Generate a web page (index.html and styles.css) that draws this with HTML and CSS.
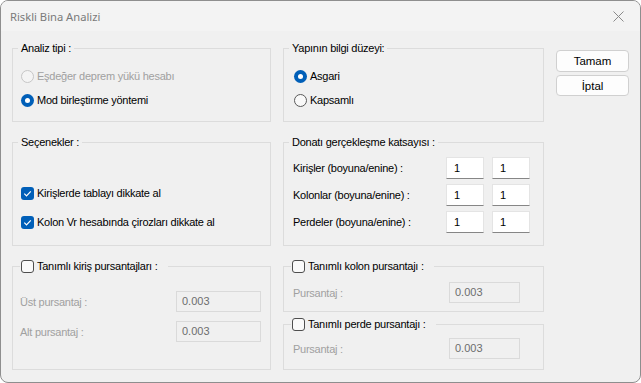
FILE: index.html
```html
<!DOCTYPE html>
<html>
<head>
    <title>Riskli Bina Analizi</title>
    <meta charset="utf-8">
    <link rel="stylesheet" href="styles.css">
</head>
<body>
    <div class="window">
        <div class="titlebar">
            <span class="title">Riskli Bina Analizi</span>
            <svg class="close" viewBox="0 0 11 11"><path d="M0.5 0.5 L10.5 10.5 M10.5 0.5 L0.5 10.5" stroke="#8a8a8a" stroke-width="1" fill="none"/></svg>
        </div>

        <div class="content">
            <!-- Analiz tipi -->
            <fieldset class="group">
                <legend class="legend">Analiz tipi :</legend>
                <div class="options opt-analiz">
                    <div class="opt disabled"><span class="radio"></span>Eşdeğer deprem yükü hesabı</div>
                    <div class="opt"><span class="radio on"></span>Mod birleştirme yöntemi</div>
                </div>
            </fieldset>

            <!-- Bilgi düzeyi -->
            <fieldset class="group">
                <legend class="legend">Yapının bilgi düzeyi:</legend>
                <div class="options opt-bilgi">
                    <div class="opt"><span class="radio on"></span>Asgari</div>
                    <div class="opt"><span class="radio"></span>Kapsamlı</div>
                </div>
            </fieldset>

            <div class="buttons">
                <button class="btn">Tamam</button>
                <button class="btn btn-cancel">İptal</button>
            </div>

            <!-- Seçenekler -->
            <fieldset class="group">
                <legend class="legend">Seçenekler :</legend>
                <div class="options opt-secenek">
                    <div class="opt opt-check">
                        <span class="check on"><svg viewBox="0 0 13 13"><path d="M3.3 6.7 L5.5 8.9 L9.8 4.4" stroke="#fff" stroke-width="1.2" fill="none"/></svg></span>
                        Kirişlerde tablayı dikkate al
                    </div>
                    <div class="opt opt-check">
                        <span class="check on"><svg viewBox="0 0 13 13"><path d="M3.3 6.7 L5.5 8.9 L9.8 4.4" stroke="#fff" stroke-width="1.2" fill="none"/></svg></span>
                        Kolon Vr hesabında çirozları dikkate al
                    </div>
                </div>
            </fieldset>

            <!-- Donatı gerçekleşme katsayısı -->
            <fieldset class="group">
                <legend class="legend">Donatı gerçekleşme katsayısı :</legend>
                <div class="rows rows-donati">
                    <div class="row"><span class="lbl">Kirişler (boyuna/enine) :</span><span class="field">1</span><span class="field">1</span></div>
                    <div class="row"><span class="lbl">Kolonlar (boyuna/enine) :</span><span class="field">1</span><span class="field">1</span></div>
                    <div class="row"><span class="lbl">Perdeler (boyuna/enine) :</span><span class="field">1</span><span class="field">1</span></div>
                </div>
            </fieldset>

            <!-- Tanımlı kiriş pursantajları -->
            <fieldset class="group">
                <legend class="legend legend-check"><span class="check"></span>Tanımlı kiriş pursantajları :</legend>
                <div class="rows rows-kiris">
                    <div class="row row-off"><span class="lbl">Üst pursantaj :</span><span class="field off">0.003</span></div>
                    <div class="row row-off"><span class="lbl">Alt pursantaj :</span><span class="field off">0.003</span></div>
                </div>
            </fieldset>

            <div class="stack">
                <fieldset class="group">
                    <legend class="legend legend-check"><span class="check"></span>Tanımlı kolon pursantajı :</legend>
                    <div class="rows rows-kolon">
                        <div class="row row-off"><span class="lbl">Pursantaj :</span><span class="field off">0.003</span></div>
                    </div>
                </fieldset>
                <fieldset class="group">
                    <legend class="legend legend-check"><span class="check"></span>Tanımlı perde pursantajı :</legend>
                    <div class="rows rows-perde">
                        <div class="row row-off"><span class="lbl">Pursantaj :</span><span class="field off">0.003</span></div>
                    </div>
                </fieldset>
            </div>
        </div>
    </div>
</body>
</html>
```

FILE: styles.css
```css
* {
    box-sizing: border-box;
}

html {
    background: #fff;
}

body {
    margin: 0;
    font-family: 'Liberation Sans', Arial, sans-serif;
    font-size: 11px;
    letter-spacing: -0.25px;
    color: #000;
}

.window {
    width: 641px;
    height: 383px;
    border: 1px solid #8e8e8e;
    border-radius: 8px;
    background: #f0f0f0;
    overflow: hidden;
}

.titlebar {
    height: 30px;
    background: #f3f3f3;
    display: flex;
    align-items: center;
    justify-content: space-between;
    padding: 0 16px 0 9px;
}

.title {
    font-family: 'Noto Sans', sans-serif;
    font-size: 11.2px;
    letter-spacing: 0;
    color: #7a7a7a;
}

.close {
    width: 11px;
    height: 11px;
}

.content {
    display: grid;
    grid-template-columns: 259px 261px 73px;
    grid-template-rows: 81px 111px 111px;
    column-gap: 12px;
    row-gap: 13px;
    padding: 10px 0 0 11px;
}

/* group boxes */
.group {
    margin: 0;
    padding: 0;
    min-width: 0;
    border: 1px solid #dcdcdc;
}

.legend {
    margin-left: 5px;
    padding: 0 3px;
    height: 14px;
    line-height: 14px;
}

.legend-check {
    display: flex;
    align-items: center;
    gap: 3px;
    margin-left: 7px;
    padding: 0 10px 0 1px;
}

.options {
    display: flex;
    flex-direction: column;
}

.opt-analiz {
    padding: 9px 0 0 8px;
}

.opt-bilgi {
    padding: 9px 0 0 10px;
}

.opt-secenek {
    padding: 32px 0 0 8px;
    gap: 5px;
}

.opt {
    display: flex;
    align-items: center;
    gap: 3px;
    height: 24px;
}

.opt.disabled {
    color: #a0a0a0;
}

/* radio and check marks */
.radio {
    flex: none;
    width: 13px;
    height: 13px;
    border-radius: 50%;
    border: 1px solid #5a5a5a;
    background: #f9f9f9;
}

.opt.disabled .radio {
    border-color: #c6c6c6;
    background: #f4f4f4;
}

.radio.on {
    border: none;
    background: #005fb8;
    display: flex;
    align-items: center;
    justify-content: center;
}

.radio.on::after {
    content: "";
    width: 5px;
    height: 5px;
    border-radius: 50%;
    background: #fff;
}

.check {
    flex: none;
    width: 13px;
    height: 13px;
    border-radius: 3px;
    border: 1px solid #4e4e4e;
    background: #fafafa;
}

.check.on {
    border: none;
    background: #005fb8;
}

.check svg {
    display: block;
    width: 13px;
    height: 13px;
}

/* label + field rows */
.rows {
    display: flex;
    flex-direction: column;
}

.row {
    display: flex;
    align-items: center;
}

.rows-donati {
    padding: 8px 0 0 9px;
    gap: 5px;
}

.rows-donati .lbl {
    width: 153px;
}

.field {
    display: flex;
    align-items: center;
    height: 22px;
    width: 38px;
    padding: 0 7px 1px;
    background: #fff;
    border: 1px solid #e4e4e4;
    border-bottom-color: #868686;
}

.field + .field {
    margin-left: 8px;
}

.field.off {
    height: 21px;
    padding: 0 5px 1px;
    background: #f0f0f0;
    border: 1px solid #dadada;
    color: #6d6d6d;
    letter-spacing: 0;
}

.row-off .lbl {
    color: #a0a0a0;
}

.rows-kiris {
    padding: 18px 0 0 7px;
    gap: 9px;
}

.rows-kiris .lbl {
    width: 156px;
}

.rows-kiris .field {
    width: 85px;
}

.rows-kolon {
    padding: 9px 0 0 9px;
}

.rows-perde {
    padding: 7px 0 0 9px;
}

.rows-kolon .lbl,
.rows-perde .lbl {
    width: 156px;
}

.rows-kolon .field,
.rows-perde .field {
    width: 71px;
}

.stack {
    display: flex;
    flex-direction: column;
    gap: 5px;
}

.stack .group {
    height: 53px;
}

/* buttons */
.buttons {
    grid-column: 3;
    grid-row: 1 / 4;
    display: flex;
    flex-direction: column;
    gap: 3px;
    padding-top: 9px;
}

.btn {
    height: 22px;
    width: 73px;
    padding: 0;
    font: inherit;
    font-size: 11.5px;
    letter-spacing: 0;
    color: #000;
    background: #fdfdfd;
    border: 1px solid #d0d0d0;
    border-radius: 4px;
}

.btn-cancel {
    height: 21px;
}
```
